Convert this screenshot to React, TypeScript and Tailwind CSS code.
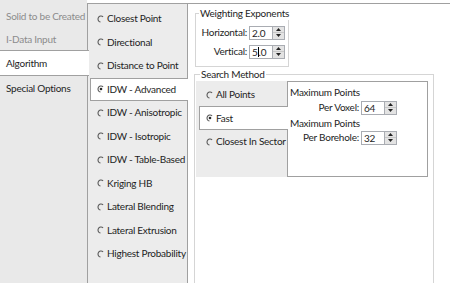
import React from "react";

function Radio({ checked }: { checked?: boolean }) {
  return (
    <svg width="8" height="8" viewBox="0 0 8 8" className="shrink-0">
      <path d="M6.1 1.9 A3 3 0 1 0 3.5 7" fill="none" stroke="#5a5a5a" strokeWidth="1.1" />
      {checked && <circle cx="4" cy="4" r="1.3" fill="#2a2a2a" />}
    </svg>
  );
}

function Spin({ value, caret }: { value: string; caret?: boolean }) {
  return (
    <div className="flex h-[14px]">
      <div className="w-[24px] h-full border border-[#a9acb2] bg-white flex items-center pl-[2px] leading-none">
        {caret ? (
          <>
            5<span className="border-l border-black h-[10px] flex items-center">.0</span>
          </>
        ) : (
          value
        )}
      </div>
      <div className="w-[12px] h-full border border-l-0 border-[#a9acb2] bg-[#e3e3e3] flex flex-col">
        <div className="flex-1 flex items-center justify-center border-b border-[#c8c8c8]">
          <svg width="5" height="3" viewBox="0 0 5 3">
            <path d="M0 3 L2.5 0 L5 3 Z" fill="#222" />
          </svg>
        </div>
        <div className="flex-1 flex items-center justify-center">
          <svg width="5" height="3" viewBox="0 0 5 3">
            <path d="M0 0 L2.5 3 L5 0 Z" fill="#222" />
          </svg>
        </div>
      </div>
    </div>
  );
}

const algorithms = [
  "Closest Point",
  "Directional",
  "Distance to Point",
  "IDW - Advanced",
  "IDW - Anisotropic",
  "IDW - Isotropic",
  "IDW - Table-Based",
  "Kriging HB",
  "Lateral Blending",
  "Lateral Extrusion",
  "Highest Probability",
];

export default function App() {
  return (
    <div className="w-[450px] h-[283px] overflow-hidden flex bg-white whitespace-nowrap text-[10px] tracking-[-0.25px] text-[#1e1e1e] font-['Lato',sans-serif]">
      {/* main tabs */}
      <div className="w-[87px] shrink-0 bg-[#e9e9e9] flex flex-col pt-[4px]">
        <div className="h-[24px] flex items-center pl-[6px] text-[#8c8c8c]">Solid to be Created</div>
        <div className="h-[22px] flex items-center pl-[6px] text-[#8c8c8c]">I-Data Input</div>
        <div className="relative z-10 w-[89px] h-[26px] bg-white border-y border-[#a0a0a0] flex items-center pl-[6px]">
          Algorithm
        </div>
        <div className="h-[24px] flex items-center pl-[6px]">Special Options</div>
      </div>

      {/* algorithm list */}
      <div className="w-[100px] shrink-0 mt-[3px] border-l border-t border-[#a0a0a0] bg-[#ececec] flex flex-col pt-[3px]">
        {algorithms.map((a) =>
          a === "IDW - Advanced" ? (
            <div
              key={a}
              className="relative z-10 ml-[2px] w-[98px] h-[23.5px] shrink-0 bg-white border-y border-l border-[#a0a0a0] flex items-center gap-[2px] pl-[6px]"
            >
              <Radio checked />
              {a}
            </div>
          ) : (
            <div key={a} className="h-[23.5px] shrink-0 flex items-center gap-[2px] pl-[9px]">
              <Radio />
              {a}
            </div>
          )
        )}
      </div>

      {/* algorithm settings */}
      <div className="flex-1 mt-[3px] border-l border-t border-[#a0a0a0] bg-white flex flex-col">
        <fieldset className="ml-[7px] mt-[2px] w-[94px] min-w-0 h-[61px] shrink-0 border border-[#d5d5d5]">
          <legend className="ml-[3px] px-[1px] leading-[14px]">Weighting Exponents</legend>
          <div className="flex items-center mt-[5px]">
            <span className="w-[51px] text-right">Horizontal:</span>
            <div className="ml-[2px]">
              <Spin value="2.0" />
            </div>
          </div>
          <div className="flex items-center mt-[4px]">
            <span className="w-[51px] text-right">Vertical:</span>
            <div className="ml-[2px]">
              <Spin value="5.0" caret />
            </div>
          </div>
        </fieldset>

        <fieldset className="ml-[6px] w-[240px] min-w-0 h-[230px] shrink-0 border border-[#d5d5d5]">
          <legend className="ml-[5px] px-[1px] leading-[14px]">Search Method</legend>
          <div className="flex">
            <div className="ml-[1px] w-[91px] h-[96px] bg-[#ececec] flex flex-col pt-[2px]">
              <div className="h-[23px] flex items-center gap-[2px] pl-[10px]">
                <Radio />
                All Points
              </div>
              <div className="relative z-10 ml-[3px] w-[89px] h-[24px] bg-white border-y border-l border-[#a0a0a0] flex items-center gap-[2px] pl-[6px]">
                <Radio checked />
                Fast
              </div>
              <div className="h-[23px] flex items-center gap-[2px] pl-[10px]">
                <Radio />
                Closest In Sector
              </div>
            </div>
            <div className="w-[141px] h-[96px] border border-[#a0a0a0] bg-white flex flex-col pt-[3px]">
              <div className="h-[14px] leading-[14px] pl-[2px]">Maximum Points</div>
              <div className="flex items-center mt-[1px]">
                <span className="w-[71px] text-right">Per Voxel:</span>
                <div className="ml-[2px]">
                  <Spin value="64" />
                </div>
              </div>
              <div className="h-[14px] leading-[14px] pl-[2px] mt-[1px]">Maximum Points</div>
              <div className="flex items-center">
                <span className="w-[71px] text-right">Per Borehole:</span>
                <div className="ml-[2px]">
                  <Spin value="32" />
                </div>
              </div>
            </div>
          </div>
        </fieldset>
      </div>
    </div>
  );
}
